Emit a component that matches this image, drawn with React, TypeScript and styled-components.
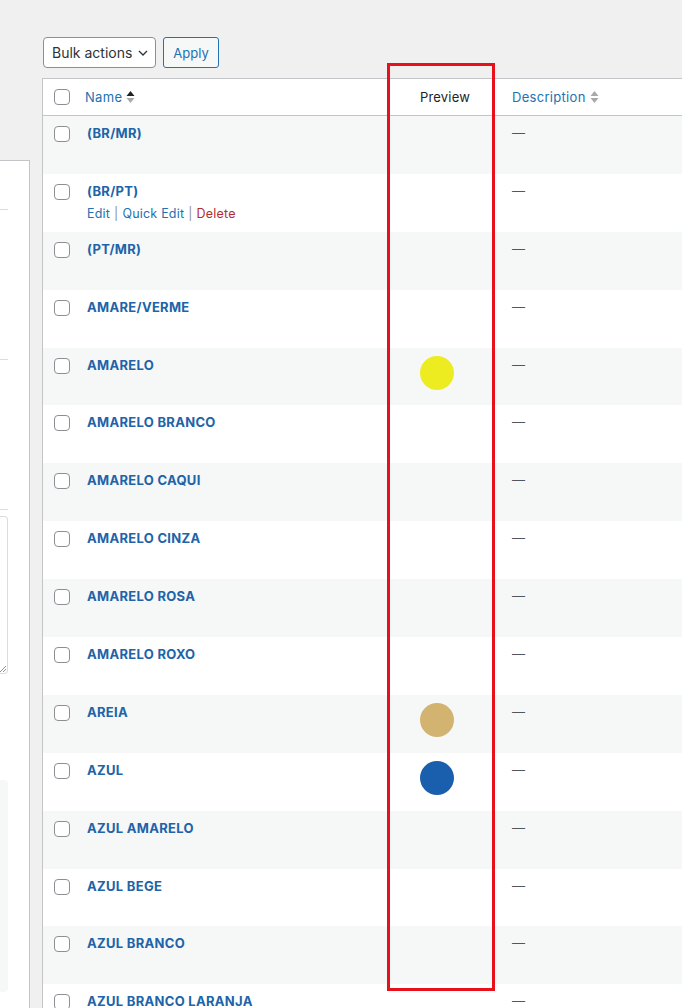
import React from "react";
import styled, { createGlobalStyle } from "styled-components";

const Global = createGlobalStyle`
  html, body { margin: 0; padding: 0; }
  body {
    background: #f0f0f1;
    font-family: Inter, "Noto Sans", "Liberation Sans", sans-serif;
    font-size: 13px;
    color: #3c434a;
    overflow: hidden;
  }
`;

const Page = styled.div`
  position: relative;
  display: flex;
  gap: 12px;
  width: 682px;
  height: 1008px;
  overflow: hidden;
`;

const Side = styled.div`
  flex: 0 0 30px;
  padding-top: 160px;
  display: flex;
  flex-direction: column;
`;

const SidePanel = styled.div`
  flex: 1;
  background: #fff;
  border-top: 1px solid #c3c4c7;
  border-right: 1px solid #c3c4c7;
  padding-right: 21px;
  display: flex;
  flex-direction: column;
`;

const SideRule = styled.div<{ $mt: number }>`
  margin-top: ${(p) => p.$mt}px;
  height: 1px;
  background: #dcdcde;
`;

const SideTextarea = styled.div`
  margin-top: 6px;
  height: 156px;
  border: 1px solid #dcdcde;
  border-left: none;
  border-radius: 0 4px 4px 0;
  position: relative;
  &::after {
    content: "";
    position: absolute;
    right: 1px;
    bottom: 1px;
    width: 6px;
    height: 6px;
    background: linear-gradient(135deg, transparent 45%, #8c8f94 45%, #8c8f94 55%, transparent 55%, transparent 70%, #8c8f94 70%, #8c8f94 80%, transparent 80%);
  }
`;

const SideBox = styled.div`
  margin-top: 106px;
  height: 212px;
  background: #f6f7f7;
  border-radius: 0 4px 4px 0;
`;

const Main = styled.div`
  flex: 1;
  padding-top: 37px;
  min-width: 0;
`;

const Toolbar = styled.div`
  display: flex;
  gap: 7px;
  height: 31px;
  margin-bottom: 10px;
  padding-left: 1px;
`;

const Select = styled.div`
  width: 113px;
  box-sizing: border-box;
  height: 31px;
  border: 1px solid #8c8f94;
  border-radius: 4px;
  background: #fff;
  display: flex;
  align-items: center;
  justify-content: space-between;
  padding: 0 6px 0 8px;
  font-size: 14px;
  color: #2c3338;
`;

const Button = styled.div`
  width: 56px;
  box-sizing: border-box;
  height: 31px;
  border: 1px solid #2271b1;
  border-radius: 3px;
  background: #f6f7f7;
  color: #2271b1;
  font-size: 13px;
  display: flex;
  align-items: center;
  justify-content: center;
`;

const Table = styled.div`
  width: 700px;
  background: #fff;
  border: 1px solid #c3c4c7;
  border-right: none;
`;

const cols = "33px 314px 110px 1fr";

const HeadRow = styled.div`
  display: grid;
  grid-template-columns: ${cols};
  height: 36px;
  border-bottom: 1px solid #c3c4c7;
  align-items: center;
`;

const Row = styled.div<{ $alt: boolean }>`
  display: grid;
  grid-template-columns: ${cols};
  height: 57.9px;
  background: ${(p) => (p.$alt ? "#f6f7f7" : "#fff")};
  align-items: start;
`;

const CheckCell = styled.div<{ $top: number }>`
  padding-left: 11px;
  padding-top: ${(p) => p.$top}px;
`;

const Check = styled.div`
  width: 16px;
  height: 16px;
  box-sizing: border-box;
  border: 1px solid #8c8f94;
  border-radius: 4px;
  background: #fff;
`;

const HeadLink = styled.div<{ $pl: number }>`
  padding-left: ${(p) => p.$pl}px;
  display: flex;
  align-items: center;
  gap: 4px;
  color: #2271b1;
  font-size: 13px;
  letter-spacing: 0.3px;
`;

const HeadPlain = styled.div`
  text-align: center;
  color: #1d2327;
  font-size: 13px;
  letter-spacing: 0.2px;
`;

const NameCell = styled.div`
  padding: 8px 0 0 11px;
  line-height: 18px;
`;

const Title = styled.div`
  color: #2063a8;
  font-weight: 700;
  font-size: 13px;
  letter-spacing: 0.3px;
`;

const Actions = styled.div`
  margin-top: 5px;
  font-size: 12.5px;
  color: #8c8f94;
  display: flex;
  gap: 4px;
  letter-spacing: 0.2px;
`;

const ActionLink = styled.span<{ $danger?: boolean }>`
  color: ${(p) => (p.$danger ? "#b32d2e" : "#2271b1")};
`;

const PreviewCell = styled.div`
  padding: 8px 0 0 30px;
`;

const Swatch = styled.div<{ $c: string }>`
  width: 34px;
  height: 34px;
  border-radius: 50%;
  background: ${(p) => p.$c};
`;

const DescCell = styled.div`
  padding: 8px 0 0 12px;
  line-height: 18px;
  color: #50575e;
`;

const Highlight = styled.div`
  position: absolute;
  left: 387px;
  top: 63px;
  width: 108px;
  height: 928px;
  box-sizing: border-box;
  border: 3px solid #e8101a;
  pointer-events: none;
`;

const SortIcon = ({ active }: { active: boolean }) => (
  <svg width="9" height="16" viewBox="0 0 9 16">
    <path d="M4.5 2 L8.5 7 H0.5 Z" fill={active ? "#1d2327" : "#a7aaad"} />
    <path d="M4.5 14 L8.5 9 H0.5 Z" fill="#a7aaad" />
  </svg>
);

const Chevron = () => (
  <svg width="12" height="12" viewBox="0 0 12 12">
    <path d="M2 4 L6 8 L10 4" fill="none" stroke="#2c3338" strokeWidth="1.3" />
  </svg>
);

const rows: { name: string; color?: string; actions?: boolean }[] = [
  { name: "(BR/MR)" },
  { name: "(BR/PT)", actions: true },
  { name: "(PT/MR)" },
  { name: "AMARE/VERME" },
  { name: "AMARELO", color: "#ecec20" },
  { name: "AMARELO BRANCO" },
  { name: "AMARELO CAQUI" },
  { name: "AMARELO CINZA" },
  { name: "AMARELO ROSA" },
  { name: "AMARELO ROXO" },
  { name: "AREIA", color: "#d3b370" },
  { name: "AZUL", color: "#1a5fad" },
  { name: "AZUL AMARELO" },
  { name: "AZUL BEGE" },
  { name: "AZUL BRANCO" },
  { name: "AZUL BRANCO LARANJA" },
];

export default function App() {
  return (
    <>
      <Global />
      <Page>
        <Side>
          <SidePanel>
            <SideRule $mt={48} />
            <SideRule $mt={149} />
            <SideRule $mt={149} />
            <SideTextarea />
            <SideBox />
          </SidePanel>
        </Side>
        <Main>
          <Toolbar>
            <Select>
              Bulk actions <Chevron />
            </Select>
            <Button>Apply</Button>
          </Toolbar>
          <Table>
            <HeadRow>
              <CheckCell $top={0}>
                <Check />
              </CheckCell>
              <HeadLink $pl={9}>
                Name <SortIcon active />
              </HeadLink>
              <HeadPlain>Preview</HeadPlain>
              <HeadLink $pl={12}>
                Description <SortIcon active={false} />
              </HeadLink>
            </HeadRow>
            {rows.map((r, i) => (
              <Row key={r.name} $alt={i % 2 === 0}>
                <CheckCell $top={10}>
                  <Check />
                </CheckCell>
                <NameCell>
                  <Title>{r.name}</Title>
                  {r.actions && (
                    <Actions>
                      <ActionLink>Edit</ActionLink>|
                      <ActionLink>Quick Edit</ActionLink>|
                      <ActionLink $danger>Delete</ActionLink>
                    </Actions>
                  )}
                </NameCell>
                <PreviewCell>{r.color && <Swatch $c={r.color} />}</PreviewCell>
                <DescCell>—</DescCell>
              </Row>
            ))}
          </Table>
        </Main>
        <Highlight />
      </Page>
    </>
  );
}
